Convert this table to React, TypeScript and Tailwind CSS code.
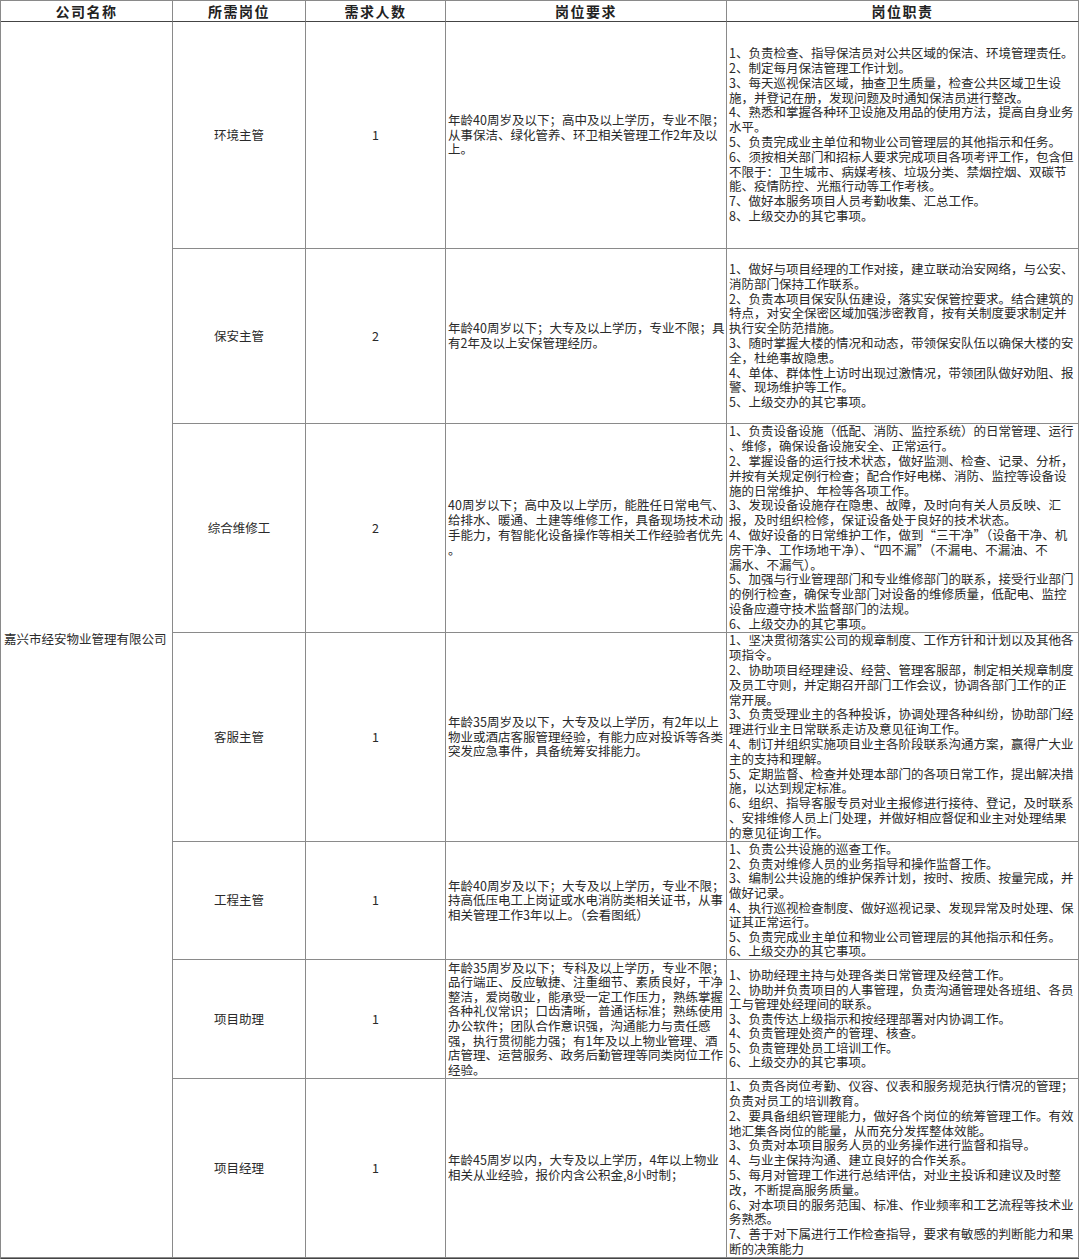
import React from "react";

type Job = {
  position: string;
  count: string;
  req: string[];
  duties: string[];
  tight?: boolean;
};

const jobs: Job[] = [
  {
    position: "环境主管",
    count: "1",
    req: [
      "年龄40周岁及以下；高中及以上学历，专业不限；",
      "从事保洁、绿化管养、环卫相关管理工作2年及以",
      "上。",
    ],
    duties: [
      "1、负责检查、指导保洁员对公共区域的保洁、环境管理责任。",
      "2、制定每月保洁管理工作计划。",
      "3、每天巡视保洁区域，抽查卫生质量，检查公共区域卫生设",
      "施，并登记在册，发现问题及时通知保洁员进行整改。",
      "4、熟悉和掌握各种环卫设施及用品的使用方法，提高自身业务",
      "水平。",
      "5、负责完成业主单位和物业公司管理层的其他指示和任务。",
      "6、须按相关部门和招标人要求完成项目各项考评工作，包含但",
      "不限于：卫生城市、病媒考核、垃圾分类、禁烟控烟、双碳节",
      "能、疫情防控、光瓶行动等工作考核。",
      "7、做好本服务项目人员考勤收集、汇总工作。",
      "8、上级交办的其它事项。",
    ],
  },
  {
    position: "保安主管",
    count: "2",
    req: [
      "年龄40周岁以下；大专及以上学历，专业不限；具",
      "有2年及以上安保管理经历。",
    ],
    duties: [
      "1、做好与项目经理的工作对接，建立联动治安网络，与公安、",
      "消防部门保持工作联系。",
      "2、负责本项目保安队伍建设，落实安保管控要求。结合建筑的",
      "特点，对安全保密区域加强涉密教育，按有关制度要求制定并",
      "执行安全防范措施。",
      "3、随时掌握大楼的情况和动态，带领保安队伍以确保大楼的安",
      "全，杜绝事故隐患。",
      "4、单体、群体性上访时出现过激情况，带领团队做好劝阻、报",
      "警、现场维护等工作。",
      "5、上级交办的其它事项。",
    ],
  },
  {
    position: "综合维修工",
    count: "2",
    req: [
      "40周岁以下；高中及以上学历，能胜任日常电气、",
      "给排水、暖通、土建等维修工作，具备现场技术动",
      "手能力，有智能化设备操作等相关工作经验者优先",
      "。",
    ],
    duties: [
      "1、负责设备设施（低配、消防、监控系统）的日常管理、运行",
      "、维修，确保设备设施安全、正常运行。",
      "2、掌握设备的运行技术状态，做好监测、检查、记录、分析，",
      "并按有关规定例行检查；配合作好电梯、消防、监控等设备设",
      "施的日常维护、年检等各项工作。",
      "3、发现设备设施存在隐患、故障，及时向有关人员反映、汇",
      "报，及时组织检修，保证设备处于良好的技术状态。",
      "4、做好设备的日常维护工作，做到“三干净”（设备干净、机",
      "房干净、工作场地干净）、“四不漏”（不漏电、不漏油、不",
      "漏水、不漏气）。",
      "5、加强与行业管理部门和专业维修部门的联系，接受行业部门",
      "的例行检查，确保专业部门对设备的维修质量，低配电、监控",
      "设备应遵守技术监督部门的法规。",
      "6、上级交办的其它事项。",
    ],
  },
  {
    position: "客服主管",
    count: "1",
    req: [
      "年龄35周岁及以下，大专及以上学历，有2年以上",
      "物业或酒店客服管理经验，有能力应对投诉等各类",
      "突发应急事件，具备统筹安排能力。",
    ],
    duties: [
      "1、坚决贯彻落实公司的规章制度、工作方针和计划以及其他各",
      "项指令。",
      "2、协助项目经理建设、经营、管理客服部，制定相关规章制度",
      "及员工守则，并定期召开部门工作会议，协调各部门工作的正",
      "常开展。",
      "3、负责受理业主的各种投诉，协调处理各种纠纷，协助部门经",
      "理进行业主日常联系走访及意见征询工作。",
      "4、制订并组织实施项目业主各阶段联系沟通方案，赢得广大业",
      "主的支持和理解。",
      "5、定期监督、检查并处理本部门的各项日常工作，提出解决措",
      "施，以达到规定标准。",
      "6、组织、指导客服专员对业主报修进行接待、登记，及时联系",
      "、安排维修人员上门处理，并做好相应督促和业主对处理结果",
      "的意见征询工作。",
    ],
  },
  {
    position: "工程主管",
    count: "1",
    tight: true,
    req: [
      "年龄40周岁及以下；大专及以上学历，专业不限；",
      "持高低压电工上岗证或水电消防类相关证书，从事",
      "相关管理工作3年以上。（会看图纸）",
    ],
    duties: [
      "1、负责公共设施的巡查工作。",
      "2、负责对维修人员的业务指导和操作监督工作。",
      "3、编制公共设施的维护保养计划，按时、按质、按量完成，并",
      "做好记录。",
      "4、执行巡视检查制度、做好巡视记录、发现异常及时处理、保",
      "证其正常运行。",
      "5、负责完成业主单位和物业公司管理层的其他指示和任务。",
      "6、上级交办的其它事项。",
    ],
  },
  {
    position: "项目助理",
    count: "1",
    tight: true,
    req: [
      "年龄35周岁及以下；专科及以上学历，专业不限；",
      "品行端正、反应敏捷、注重细节、素质良好，干净",
      "整洁，爱岗敬业，能承受一定工作压力，熟练掌握",
      "各种礼仪常识；口齿清晰，普通话标准；熟练使用",
      "办公软件；团队合作意识强，沟通能力与责任感",
      "强，执行贯彻能力强；有1年及以上物业管理、酒",
      "店管理、运营服务、政务后勤管理等同类岗位工作",
      "经验。",
    ],
    duties: [
      "1、协助经理主持与处理各类日常管理及经营工作。",
      "2、协助并负责项目的人事管理，负责沟通管理处各班组、各员",
      "工与管理处经理间的联系。",
      "3、负责传达上级指示和按经理部署对内协调工作。",
      "4、负责管理处资产的管理、核查。",
      "5、负责管理处员工培训工作。",
      "6、上级交办的其它事项。",
    ],
  },
  {
    position: "项目经理",
    count: "1",
    req: [
      "年龄45周岁以内，大专及以上学历，4年以上物业",
      "相关从业经验，报价内含公积金,8小时制；",
    ],
    duties: [
      "1、负责各岗位考勤、仪容、仪表和服务规范执行情况的管理；",
      "负责对员工的培训教育。",
      "2、要具备组织管理能力，做好各个岗位的统筹管理工作。有效",
      "地汇集各岗位的能量，从而充分发挥整体效能。",
      "3、负责对本项目服务人员的业务操作进行监督和指导。",
      "4、与业主保持沟通、建立良好的合作关系。",
      "5、每月对管理工作进行总结评估，对业主投诉和建议及时整",
      "改，不断提高服务质量。",
      "6、对本项目的服务范围、标准、作业频率和工艺流程等技术业",
      "务熟悉。",
      "7、善于对下属进行工作检查指导，要求有敏感的判断能力和果",
      "断的决策能力",
    ],
  },
];

const cell = "border-r border-b border-[#8a8a8a] overflow-hidden";

function Lines({ lines, tight }: { lines: string[]; tight?: boolean }) {
  return (
    <div className={tight ? "w-full leading-[14.6px]" : "w-full leading-[14.8px]"}>
      {lines.map((l, i) => (
        <div key={i} className="whitespace-nowrap">
          {l}
        </div>
      ))}
    </div>
  );
}

export default function App() {
  return (
    <div className="w-[1080px] h-[1259px] bg-white text-[#2a2a2a] font-['Noto_Sans_CJK_SC',sans-serif] text-[12.5px] leading-[14.8px]">
      <div className="grid grid-cols-[172px_133px_140px_281px_352px] grid-rows-[21px_227px_175px_209px_209px_118px_119px_179px] w-[1079px] border-l border-t border-[#8a8a8a] border-b-2 border-b-[#444]">
        {/* Header */}
        {["公司名称", "所需岗位", "需求人数", "岗位要求", "岗位职责"].map((h) => (
          <div
            key={h}
            className={`${cell} border-b-[#444] flex items-center justify-center text-[14px] font-bold tracking-[1.5px] text-[#222]`}
          >
            {h}
          </div>
        ))}

        {/* Company name spans all rows */}
        <div
          className={`${cell} row-span-7 col-start-1 row-start-2 flex items-center pl-[3px] whitespace-nowrap`}
        >
          嘉兴市经安物业管理有限公司
        </div>

        {jobs.map((job) => (
          <React.Fragment key={job.position}>
            <div className={`${cell} col-start-2 flex items-center justify-center`}>
              {job.position}
            </div>
            <div className={`${cell} flex items-center justify-center`}>
              {job.count}
            </div>
            <div className={`${cell} flex items-center pl-[2px]`}>
              <Lines lines={job.req} tight={job.tight} />
            </div>
            <div className={`${cell} flex items-center pl-[2px]`}>
              <Lines lines={job.duties} tight={job.tight} />
            </div>
          </React.Fragment>
        ))}
      </div>
    </div>
  );
}
